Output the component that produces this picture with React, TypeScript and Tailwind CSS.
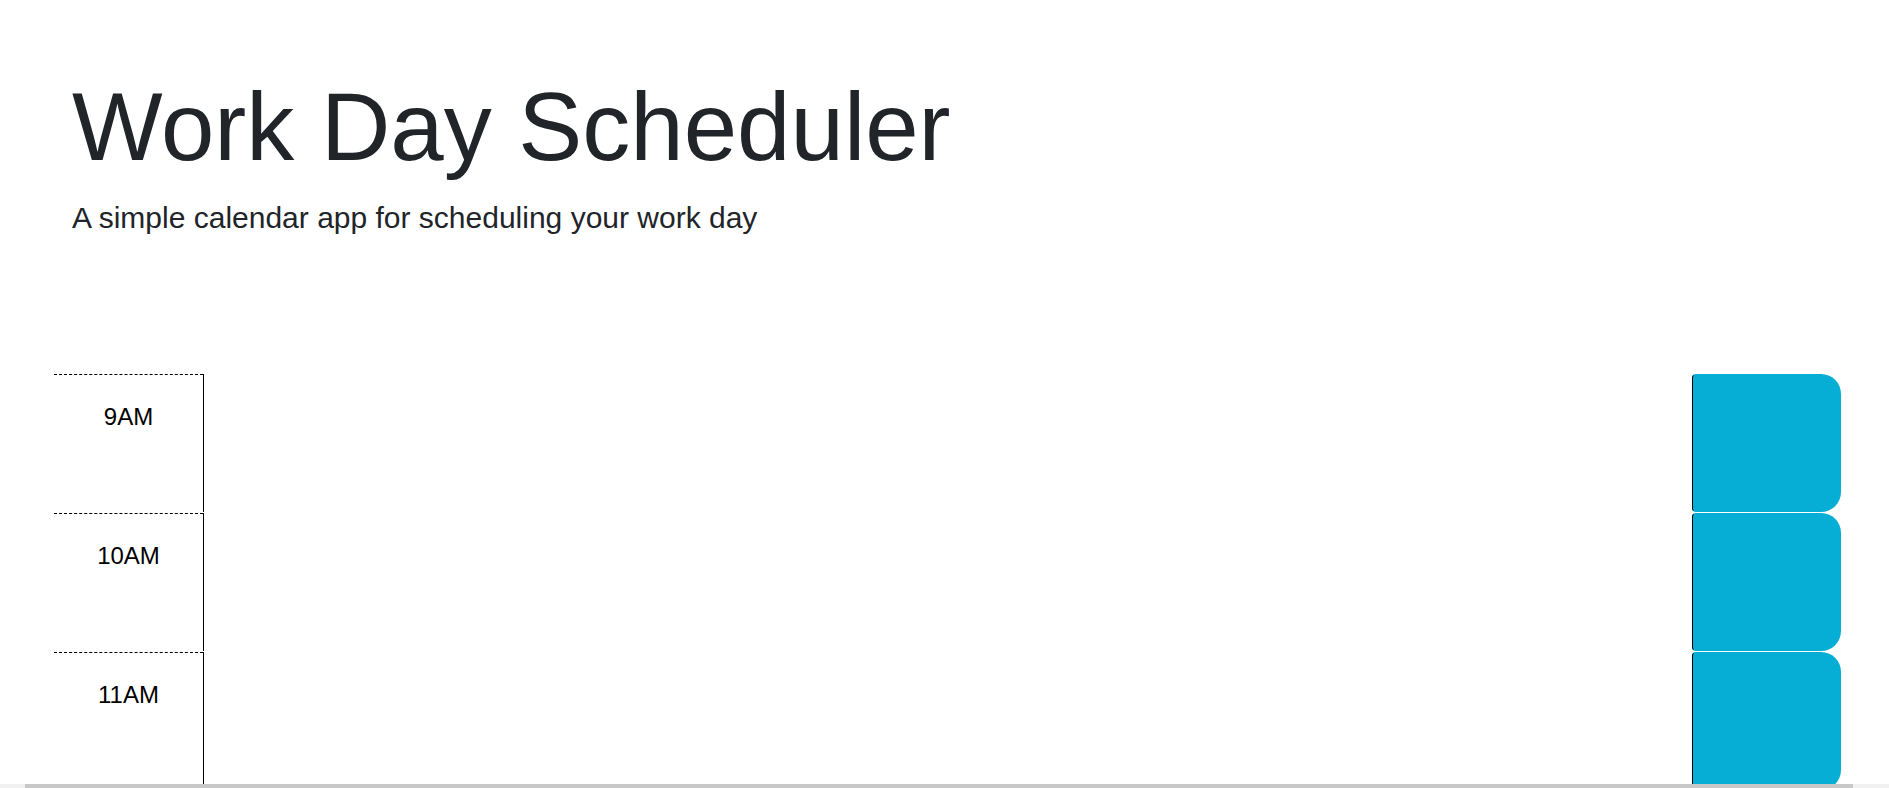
import React from "react";

const hours = ["9AM", "10AM", "11AM"];

export default function App() {
  return (
    <div
      className="relative h-[788px] w-[1889px] overflow-hidden bg-white"
      style={{ fontFamily: '"Liberation Sans", Arial, sans-serif' }}
    >
      <header className="pl-[72px] pt-[69px]">
        <h1 className="m-0 text-[96px] leading-[115px] font-normal text-[#212529]">Work Day Scheduler</h1>
        <p className="mt-[11px] text-[30px] leading-[45px] text-[#212529]">
          A simple calendar app for scheduling your work day
        </p>
      </header>

      <div className="mt-[133px] pl-[54px] pr-[48px]">
        {hours.map((h) => (
          <div key={h} className="flex h-[139px] border-t border-white">
            <div className="w-[149px] border-t border-dashed border-black pt-[24px] text-center text-[24px] leading-[36px] text-black">
              {h}
            </div>
            <textarea
              className="flex-1 resize-none border-0 border-l border-solid border-black bg-transparent p-[10px] text-black outline-none"
              aria-label={`${h} event`}
            />
            <button
              type="button"
              className="w-[149px] rounded-tl-[4px] rounded-bl-[4px] rounded-tr-[20px] rounded-br-[20px] border border-transparent border-l-black bg-[#06aed5] text-white"
              aria-label="Save"
            />
          </div>
        ))}
      </div>

      <div className="absolute bottom-0 left-0 h-[4px] w-full bg-[#f1f1f1]">
        <div className="absolute left-[25px] top-0 h-full w-[1828px] bg-[#c8c8c8]" />
      </div>
    </div>
  );
}
